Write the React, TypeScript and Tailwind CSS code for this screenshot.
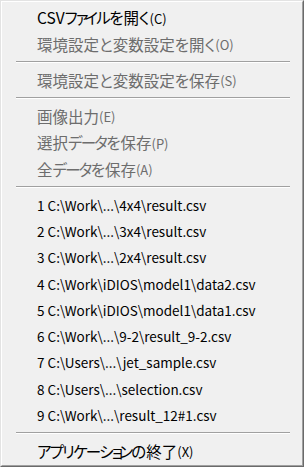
import React from "react";

type Item =
  | { kind: "item"; label: string; mn?: string; disabled?: boolean; path?: boolean }
  | { kind: "sep" };

const items: Item[] = [
  { kind: "item", label: "CSVファイルを開く", mn: "(C)" },
  { kind: "item", label: "環境設定と変数設定を開く", mn: "(O)", disabled: true },
  { kind: "sep" },
  { kind: "item", label: "環境設定と変数設定を保存", mn: "(S)", disabled: true },
  { kind: "sep" },
  { kind: "item", label: "画像出力", mn: "(E)", disabled: true },
  { kind: "item", label: "選択データを保存", mn: "(P)", disabled: true },
  { kind: "item", label: "全データを保存", mn: "(A)", disabled: true },
  { kind: "sep" },
  { kind: "item", path: true, label: "1 C:\\Work\\...\\4x4\\result.csv" },
  { kind: "item", path: true, label: "2 C:\\Work\\...\\3x4\\result.csv" },
  { kind: "item", path: true, label: "3 C:\\Work\\...\\2x4\\result.csv" },
  { kind: "item", path: true, label: "4 C:\\Work\\iDIOS\\model1\\data2.csv" },
  { kind: "item", path: true, label: "5 C:\\Work\\iDIOS\\model1\\data1.csv" },
  { kind: "item", path: true, label: "6 C:\\Work\\...\\9-2\\result_9-2.csv" },
  { kind: "item", path: true, label: "7 C:\\Users\\...\\jet_sample.csv" },
  { kind: "item", path: true, label: "8 C:\\Users\\...\\selection.csv" },
  { kind: "item", path: true, label: "9 C:\\Work\\...\\result_12#1.csv" },
  { kind: "sep" },
  { kind: "item", label: "アプリケーションの終了", mn: "(X)" },
];

const SMALL = "ァィゥェォャュョッ";

function renderLabel(label: string) {
  return Array.from(label).map((ch, i) => {
    if (SMALL.includes(ch)) {
      return (
        <span key={i} className="tracking-[-4px]">
          {ch}
        </span>
      );
    }
    if (/[\u30A0-\u30FF]/.test(ch)) {
      return (
        <span key={i} className="tracking-[-1.75px]">
          {ch}
        </span>
      );
    }
    return <span key={i}>{ch}</span>;
  });
}

export default function App() {
  return (
    <div
      className="w-[304px] h-[467px] bg-[#f0f0f0] border border-t-[#e3e3e3] border-l-[#e3e3e3] border-r-[#6a6a6a] border-b-[#6a6a6a] overflow-hidden"
      style={{ fontFamily: '"Noto Sans CJK JP", "Noto Sans", sans-serif', fontFeatureSettings: '"palt"' }}
    >
      <div className="h-full border border-t-white border-l-white border-r-[#a0a0a0] border-b-[#a0a0a0] pt-[3px] flex flex-col">
        {items.map((it, i) =>
          it.kind === "sep" ? (
            <div key={i} className="h-[10px] shrink-0 pl-[14px] pr-[12px] pt-[3px]">
              <div className="border-t border-t-[#a0a0a0] border-b border-b-white" />
            </div>
          ) : (
            <div
              key={i}
              className={`h-[26.25px] shrink-0 flex items-center pl-[35px] leading-none whitespace-nowrap ${
                it.path ? "text-[13.5px]" : "text-[15.5px]"
              } ${it.disabled ? "text-[#6d6d6d]" : "text-black"}`}
            >
              <span>{it.path ? it.label : renderLabel(it.label)}</span>
              {it.mn && <span className="text-[13px]">{it.mn}</span>}
            </div>
          )
        )}
      </div>
    </div>
  );
}
